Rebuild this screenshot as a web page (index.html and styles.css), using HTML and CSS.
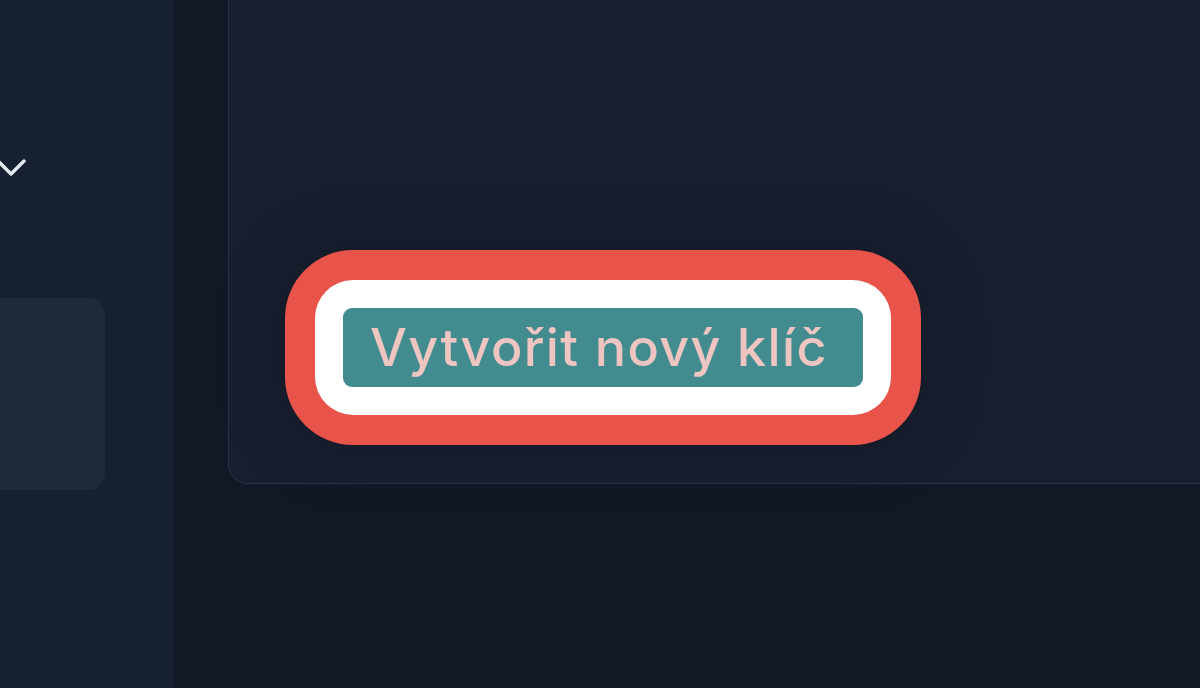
FILE: index.html
```html
<!DOCTYPE html>
<html lang="cs">
<head>
<meta charset="utf-8">
<title>Klíče</title>
<link rel="stylesheet" href="styles.css">
</head>
<body>
<div class="app">
  <aside class="sidebar">
    <div class="chevron-row">
      <svg class="chevron" width="30" height="20" viewBox="0 0 30 20"><path d="M1 3 L14 16 L27 3" fill="none" stroke="#e6e9f0" stroke-width="3.4" stroke-linecap="round" stroke-linejoin="round"/></svg>
    </div>
    <div class="side-card"></div>
  </aside>
  <main class="main">
    <section class="card">
      <div class="ring-red">
        <div class="ring-white">
          <button class="btn">Vytvořit nový klíč</button>
        </div>
      </div>
    </section>
  </main>
</div>
</body>
</html>
```

FILE: styles.css
```css
* { box-sizing: border-box; }
html, body { margin: 0; padding: 0; }
body {
  background: #121826;
  font-family: Inter, "Noto Sans", sans-serif;
  width: 1200px;
  height: 688px;
  overflow: hidden;
}
.app {
  display: flex;
  height: 688px;
}
.sidebar {
  width: 174px;
  flex: none;
  background: #172030;
  display: flex;
  flex-direction: column;
}
.chevron-row {
  margin-top: 158px;
  margin-left: -3px;
  height: 20px;
}
.chevron { display: block; }
.side-card {
  margin-top: 120px;
  margin-left: -30px;
  width: 135px;
  height: 192px;
  border-radius: 16px;
  background: #1c2a3a;
}
.main {
  flex: 1;
  padding-left: 54px;
  overflow: hidden;
}
.card {
  margin-top: -40px;
  width: calc(100% + 40px);
  height: 524px;
  background: #182030;
  border: 1.5px solid #2a3445;
  border-radius: 20px;
  padding: 289px 0 0 56px;
}
.ring-red {
  display: inline-block;
  padding: 30px;
  border-radius: 68px;
  background: #e8544a;
  box-shadow: 0 0 50px 20px rgba(12, 10, 20, 0.22);
}
.ring-white {
  padding: 28px;
  border-radius: 38px;
  background: #ffffff;
}
.btn {
  display: flex;
  align-items: center;
  justify-content: center;
  height: 79px;
  width: 520px;
  padding: 0 8px 0 0;
  border: none;
  border-radius: 9px;
  background: #428c90;
  color: #eec5c0;
  font-family: Inter, "Noto Sans", sans-serif;
  font-size: 52px;
  font-weight: 500;
  letter-spacing: 1.4px;
}
```
